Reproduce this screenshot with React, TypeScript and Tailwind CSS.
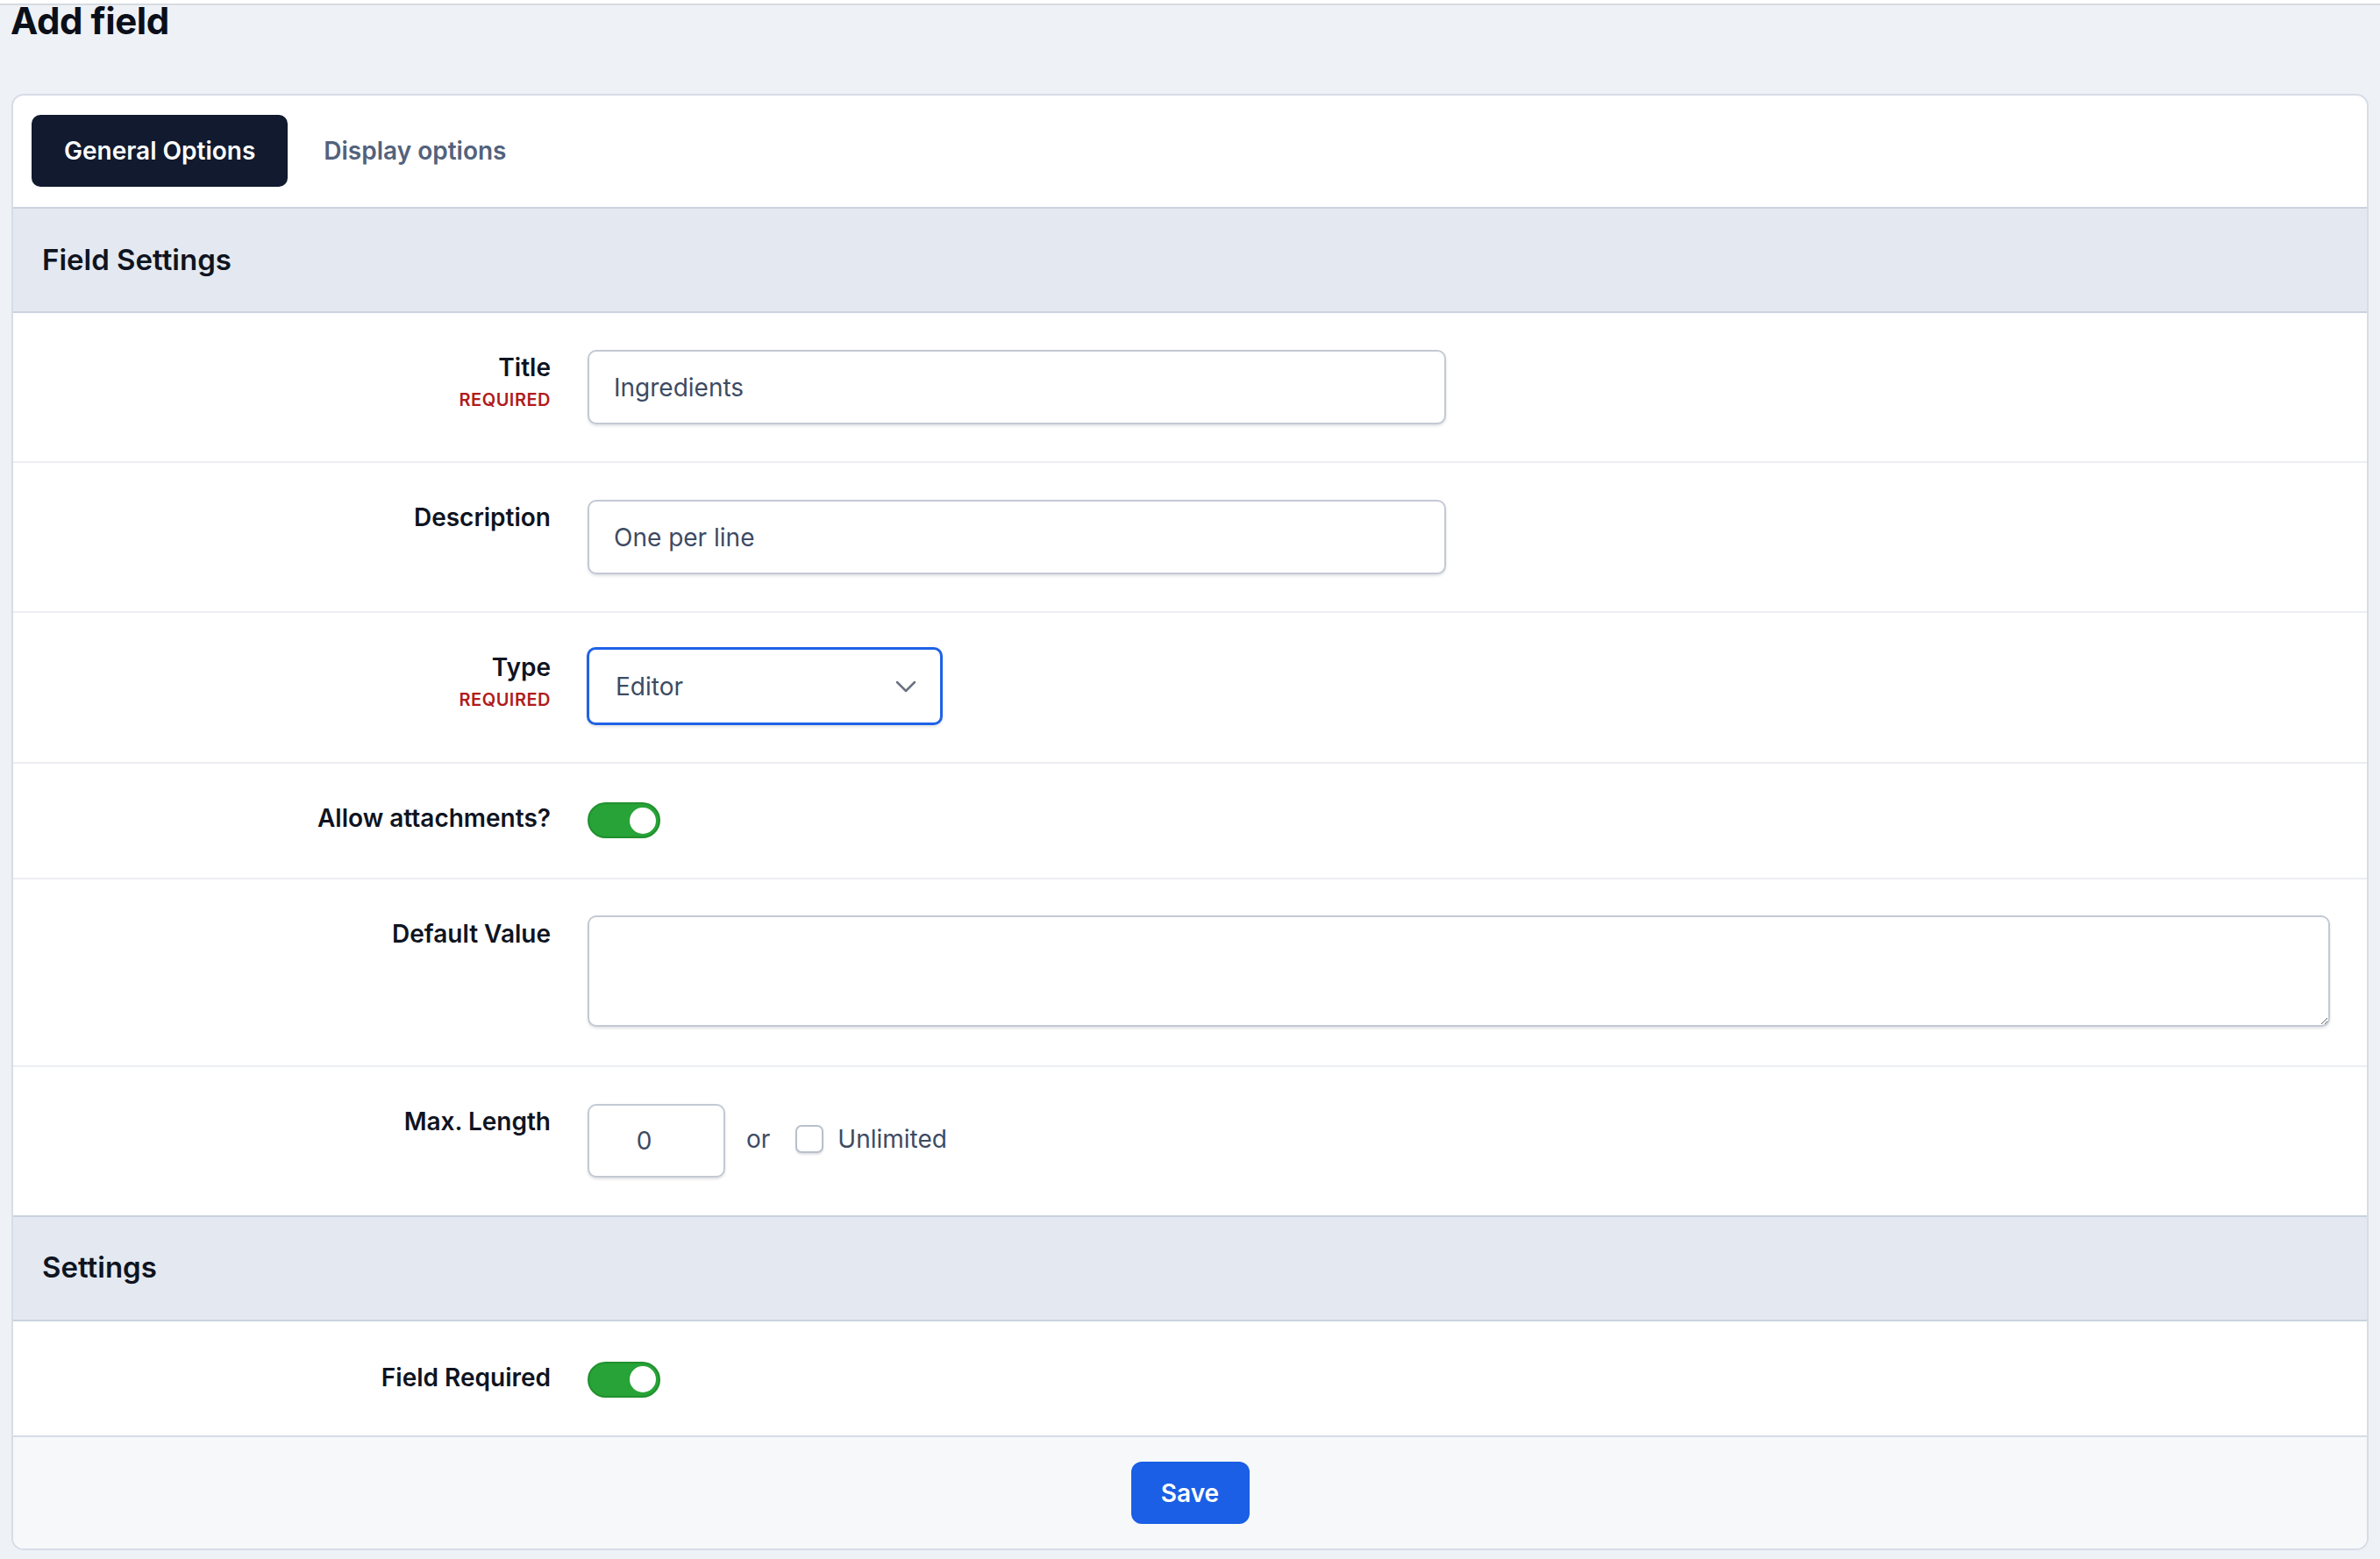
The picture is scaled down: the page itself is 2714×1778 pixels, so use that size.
import { ReactNode } from "react";

function Toggle() {
  return (
    <span className="relative inline-flex h-[41px] w-[83px] items-center justify-end rounded-full border-2 border-[#21902e] bg-[#27a337] pr-[3px]">
      <span className="h-[30px] w-[30px] rounded-full bg-white" />
    </span>
  );
}

function Label({ text, required, className = "" }: { text: string; required?: boolean; className?: string }) {
  return (
    <div className={`w-[613px] shrink-0 text-right ${className}`}>
      <div className="text-[28px] font-semibold leading-[34px] text-[#0f1421]">{text}</div>
      {required && (
        <div className="mt-[8px] text-[20px] font-semibold uppercase leading-[24px] tracking-wide text-[#b01c1c]">
          Required
        </div>
      )}
    </div>
  );
}

function Row({ children, last, className = "py-[42px]" }: { children: ReactNode; last?: boolean; className?: string }) {
  return (
    <div className={`flex ${className} ${last ? "" : "border-b-2 border-[#eceef2]"}`}>{children}</div>
  );
}

function SectionHeader({ title }: { title: string }) {
  return (
    <div className="flex h-[121px] items-center border-y-2 border-[#c9d2de] bg-[#e4e9f1] px-[33px]">
      <h3 className="text-[33px] font-semibold text-[#0f1421]">{title}</h3>
    </div>
  );
}

const inputCls =
  "h-[85px] rounded-[10px] border-2 border-[#c3c9d4] bg-white px-[28px] text-[28px] text-[#3d4b63] shadow-[0_2px_3px_rgba(15,23,42,0.12)] outline-none";

export default function App() {
  return (
    <div className="min-h-screen bg-[#eef1f6] pb-[11px] font-['Inter',sans-serif]">
      <div className="h-[4px] bg-white" />
      <div className="h-[2px] bg-[#d7dbe2]" />
      <h1 className="pl-[12px] text-[42px] font-bold leading-[36px] tracking-[-0.01em] text-[#0b0f19]">Add field</h1>

      <div className="mx-[13px] mt-[65px] overflow-hidden rounded-[14px] border-2 border-[#d6dde7] bg-white">
        {/* Tabs */}
        <div className="flex gap-[4px] px-[21px] pt-[22px] pb-[23px]">
          <button className="h-[82px] rounded-[10px] bg-[#111a2e] px-[37px] text-[28px] font-semibold text-white">
            General Options
          </button>
          <button className="h-[82px] rounded-[10px] px-[37px] text-[28px] font-semibold text-[#53627c]">
            Display options
          </button>
        </div>

        <SectionHeader title="Field Settings" />

        <Row>
          <Label text="Title" required className="pt-[3px]" />
          <input readOnly defaultValue="Ingredients" className={`ml-[42px] w-[979px] ${inputCls}`} />
        </Row>

        <Row>
          <Label text="Description" className="pt-[3px]" />
          <input readOnly defaultValue="One per line" className={`ml-[42px] w-[979px] ${inputCls}`} />
        </Row>

        <Row className="pt-[39px] pb-[42px]">
          <Label text="Type" required className="pt-[6px]" />
          <div className="ml-[41px] flex h-[89px] w-[406px] items-center justify-between rounded-[10px] border-[3px] border-[#1f62e6] bg-white pr-[27px] pl-[30px] shadow-[0_2px_3px_rgba(15,23,42,0.12)]">
            <span className="text-[28px] text-[#3d4b63]">Editor</span>
            <svg width="24" height="14" viewBox="0 0 24 14" fill="none">
              <polyline points="2,2 12,12 22,2" stroke="#6b7280" strokeWidth="2.5" strokeLinecap="round" strokeLinejoin="round" />
            </svg>
          </div>
        </Row>

        <Row className="items-center py-[44px]">
          <Label text="Allow attachments?" className="mb-[5px]" />
          <div className="ml-[42px]">
            <Toggle />
          </div>
        </Row>

        <Row className="pt-[41px] pb-[44px]">
          <Label text="Default Value" className="pt-[4px]" />
          <div className="ml-[42px] flex-1 pr-[42px]">
            <textarea
              readOnly
              className="block h-[127px] w-full rounded-[10px] border-2 border-[#c3c9d4] bg-white px-[28px] py-[20px] text-[28px] text-[#3d4b63] shadow-[0_2px_3px_rgba(15,23,42,0.12)] outline-none"
            />
          </div>
        </Row>

        <Row last className="pt-[42px] pb-[43px]">
          <Label text="Max. Length" className="pt-[3px]" />
          <div className="ml-[42px] flex items-center">
            <input
              readOnly
              defaultValue="0"
              className="h-[84px] w-[157px] rounded-[10px] border-2 border-[#c3c9d4] bg-white pr-[58px] pl-[30px] text-center text-[28px] text-[#3d4b63] shadow-[0_2px_3px_rgba(15,23,42,0.12)] outline-none"
            />
            <span className="ml-[24px] mb-[4px] text-[28px] text-[#3d4b63]">or</span>
            <label className="ml-[29px] mb-[4px] flex items-center gap-[16px]">
              <span className="h-[32px] w-[32px] rounded-[7px] border-2 border-[#b9c0cc] bg-white shadow-[0_2px_2px_rgba(15,23,42,0.12)]" />
              <span className="text-[28px] text-[#3d4b63]">Unlimited</span>
            </label>
          </div>
        </Row>

        <SectionHeader title="Settings" />

        <Row last className="items-center pt-[46px] pb-[43px]">
          <Label text="Field Required" className="mb-[5px]" />
          <div className="ml-[42px]">
            <Toggle />
          </div>
        </Row>

        {/* Footer */}
        <div className="flex justify-center border-t-2 border-[#d8dde6] bg-[#f7f8fa] py-[28px]">
          <button className="h-[71px] w-[135px] rounded-[12px] bg-[#1a5fe5] text-[28px] font-semibold text-white">
            Save
          </button>
        </div>
      </div>
    </div>
  );
}
